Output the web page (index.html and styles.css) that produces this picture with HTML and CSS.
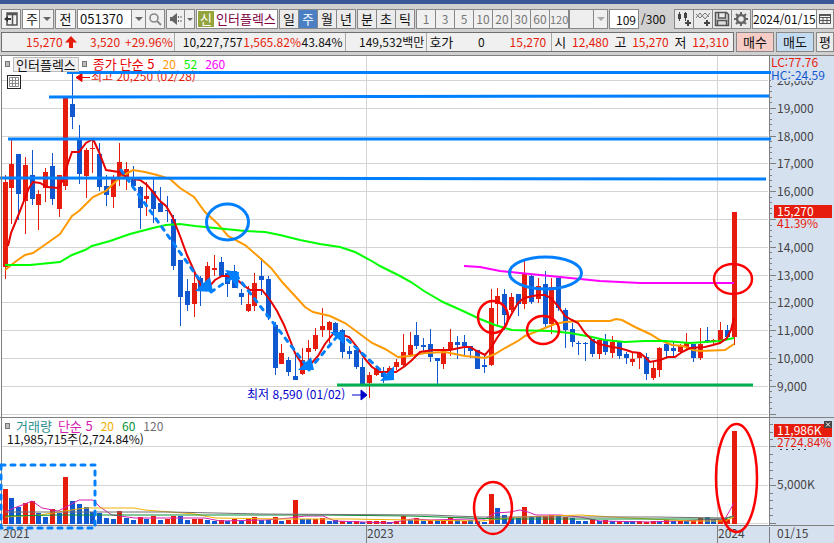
FILE: index.html
```
<!DOCTYPE html>
<html lang="ko">
<head>
<meta charset="utf-8">
<title>인터플렉스 주봉 차트</title>
<link rel="stylesheet" href="styles.css">
</head>
<body>
<div class="app">
<header class="toolbar">
  <button class="box icon-btn" aria-label="패널">
    <svg width="14" height="14" viewBox="0 0 14 14"><path d="M3 1h10v12H3zM3 2.500h10M8.500 3v10" fill="none" stroke="#555" stroke-width="1.500"/><path d="M0 7l4-3v6zM4 6h3v2H4z" fill="#333"/></svg>
  </button>
  <span class="box drop w-cycle"><select aria-label="주기"><option>주</option></select></span>
  <button class="box key">전</button>
  <span class="box code">
    <input type="text" value="051370" aria-label="종목코드">
    <button class="sub arrow" aria-label="종목 목록"></button>
    <button class="sub" aria-label="검색"><svg width="14" height="14" viewBox="0 0 14 14"><circle cx="6" cy="6" r="4" fill="none" stroke="#888" stroke-width="1.600"/><path d="M9 9l4 4" stroke="#888" stroke-width="2"/></svg></button>
  </span>
  <span class="box sound">
    <button class="sub wide" aria-label="소리"><svg width="14" height="14" viewBox="0 0 14 14"><path d="M1 5h2l5-4v12l-5-4H1z" fill="#666"/><path d="M9.500 4v6M12 4v6" stroke="#666" stroke-dasharray="2 2"/></svg></button>
    <button class="sub arrow thin" aria-label="소리 설정"></button>
  </span>
  <span class="box stock"><b class="badge">신</b><span class="name">인터플렉스</span></span>
  <span class="box group">
    <button>일</button><button class="on">주</button><button>월</button><button>년</button>
  </span>
  <span class="box group">
    <button>분</button><button>초</button><button>틱</button>
  </span>
  <span class="box group off">
    <button disabled>1</button><button disabled>3</button><button disabled>5</button><button disabled>10</button><button disabled>20</button><button disabled>30</button><button disabled>60</button><button disabled>120</button>
  </span>
  <span class="box drop w-min off"><select aria-label="분 주기" disabled><option></option></select></span>
  <span class="count"><input class="box" type="text" value="109" aria-label="표시 봉 수"><span>/300</span></span>
  <span class="box group tools">
    <button aria-label="종목 추가"><svg width="16" height="16" viewBox="0 0 16 16"><path d="M3.500 1v9M9.500 1v9" stroke="#444"/><path d="M2 3h3v5H2zM8 2h3v5H8z" fill="#444"/><path d="M9 12h6M12 9v6" stroke="#444" stroke-width="2"/></svg></button>
    <button aria-label="지표 추가"><svg width="16" height="16" viewBox="0 0 16 16"><path d="M1 7l4-5 5 6 5-6M1 3l4 4 5-5 4 4" fill="none" stroke="#777"/><path d="M9 12h6M12 9v6" stroke="#444" stroke-width="2"/></svg></button>
    <button aria-label="저장"><svg width="16" height="16" viewBox="0 0 16 16"><path d="M1.500 1.500h11l2 2v11h-13zM4.500 2v5h7V2M3.500 14.500v-5h9v5" fill="#ddd" stroke="#555" stroke-width="1.500"/></svg></button>
    <button aria-label="설정"><svg width="16" height="16" viewBox="0 0 16 16"><circle cx="8" cy="8" r="4" fill="none" stroke="#666" stroke-width="2.500"/><path d="M8 1v3M8 12v3M1 8h3M12 8h3M3 3l2 2M11 11l2 2M13 3l-2 2M5 11l-2 2" stroke="#666" stroke-width="2"/></svg></button>
  </span>
  <span class="box date">
    <input type="text" value="2024/01/15" aria-label="날짜">
    <button class="sub" aria-label="달력"><svg width="14" height="14" viewBox="0 0 14 14"><path d="M1.500 2.500h11v9h-11zM1 5.500h12M5 5v7M9 5v7M1 8.500h12" fill="none" stroke="#555"/><path d="M1 2h12v2H1z" fill="#555"/></svg></button>
  </span>
</header>

<div class="quote">
  <div class="cells">
    <div class="cell c1"><span class="up">15,270</span><svg width="12" height="12" viewBox="0 0 12 12"><path d="M6 0l6 6.500H8V12H4V6.500H0z" fill="#e61c0c"/></svg><span class="up change">3,520</span><span class="up">+29.96%</span></div>
    <div class="cell c2"><span>10,227,757</span><span class="up">1,565.82%</span><span>43.84%</span></div>
    <div class="cell c3"><span>149,532백만</span></div>
    <div class="cell c4"><span class="k">호가</span><span>0</span><span class="up">15,270</span></div>
    <div class="cell c5"><span class="k">시</span><span class="up">12,480</span><span class="k">고</span><span class="up">15,270</span><span class="k">저</span><span class="up">12,310</span></div>
  </div>
  <button class="trade buy">매수</button>
  <button class="trade sell">매도</button>
  <button class="trade avg">평</button>
</div>

<main class="charts">
  <section class="panel">
    <svg class="plot" viewBox="0 55 834 362" role="img" aria-label="주가 차트">
      <rect class="paper" x="0" y="55" width="834" height="362"/>
      <rect class="axis-bg" x="770" y="55" width="64" height="362"/>
      <g id="price-grid" class="grid"></g>
      <path class="grid" d="M366.500 56V417M717.500 56V417"/>
      <g id="candles"></g>
      <g class="ma">
        <polyline stroke="#f0f" points="464,266 480,267 500,271 520,273 550,276 580,279 600,281 640,283 734,283"/>
        <polyline stroke="#f90" points="5,270 15,262 25,255 33,253 46,244 60,234 72,216 79,211 93,197 106,191 113,184 122,176 133,170 145,172 157,175 170,179 180,188 194,197 205,212 218,224 228,236 245,245 260,258 271,268 283,283 295,296 305,307 313,312 330,316 345,323 360,334 372,343 385,349 398,357 410,356 425,353 445,352 465,356 485,358 495,354 505,348 518,341 525,336 540,330 555,324 565,322 580,321 610,321 616,319 622,320 635,327 650,334 660,340 672,345 683,346 693,350 700,351 725,350 734,344"/>
        <polyline stroke="#0f0" points="5,265 30,265 60,262 72,255 85,250 92,246 110,241 130,234 153,228 166,225 180,224 195,226 215,228 245,231 265,232 280,235 300,240 320,244 340,247 355,252 370,260 380,266 400,276 411,282 424,291 443,302 463,311 480,319 495,325 505,328 512,330 550,331 570,333 592,337 605,340 625,342 645,341 665,341 690,343 705,342 720,341 734,338"/>
        <polyline stroke="#e60000" points="8,246 11,233 18,216 25,198 29,188 33,182 40,183 47,187 58,188 63,180 66,170 68,163 72,152 79,152 86,143 93,139 99,152 106,170 119,172 126,177 133,179 140,180 147,185 153,192 160,201 166,206 172,216 180,236 187,255 195,273 203,290 208,288 215,280 222,276 228,276 235,278 242,284 250,290 262,290 270,300 277,311 284,325 290,340 295,353 302,364 310,365 318,356 325,344 333,334 340,334 349,337 357,347 365,359 372,367 380,372 396,372 405,366 412,360 420,352 433,350 450,350 464,347 470,347 477,351 485,355 491,348 497,338 504,328 511,315 518,303 524,298 538,295 545,295 551,298 558,306 565,316 572,320 578,323 585,333 592,340 599,344 612,347 619,348 626,350 632,352 640,353 646,358 650,362 660,360 668,357 675,357 682,352 690,348 705,347 713,345 720,343 727,338 731,330 734,318"/>
      </g>
      <path class="axis-line" d="M769.500 55V417"/>
      <g id="price-ticks"></g>
      <text class="up-text" x="91" y="81">최고 20,250 (02/28)</text>
      <path d="M76 77.500l6-4v8zM82 77.500h8" fill="#e60000" stroke="#e60000"/>
      <text class="low-text" x="247" y="399">최저 8,590 (01/02)</text>
      <path d="M367 395l-6-5v10zM352 395h10" fill="#00c" stroke="#00c"/>
      <g class="mark-blue">
        <path d="M67 72.500H771M49 97L769 96M8 139H771M0 178L766 179"/>
        <ellipse cx="227.500" cy="222" rx="21" ry="18"/>
        <ellipse cx="545.500" cy="273" rx="36" ry="16"/>
        <path class="dash" d="M121 170L204 286M211 292L236 275M236 275L306 365M309 370L340 333M340 333L388 377"/>
      </g>
      <g fill="#0080ff">
        <path d="M195 291L210 277L213 292zM225 270L239 272L238 289zM298 370L311 357L314 370zM330 332L344 332L344 344zM380 381L394 366L394 380z"/>
      </g>
      <path d="M337 385H753" stroke="#00b050" stroke-width="3"/>
      <g class="mark-red">
        <ellipse cx="493" cy="317" rx="15" ry="16"/>
        <ellipse cx="543" cy="330" rx="16" ry="14"/>
        <ellipse cx="733" cy="279" rx="19" ry="15"/>
      </g>
      <rect class="axis-bg" x="771" y="56" width="63" height="25"/>
      <text class="up-text" x="771" y="67">LC:77.76</text>
      <text class="hc" x="771" y="80">HC:-24.59</text>
      <rect class="tag" x="774" y="205" width="58" height="13"/>
      <text class="tag-text" x="777" y="216">15,270</text>
      <text class="up-text" x="777" y="228">41.39%</text>
      <path class="axis-line" d="M1.500 55V417M0 55.500H834"/>
    </svg>
    <div class="legend">
      <i class="dot"></i><span class="title">인터플렉스</span><i class="dot"></i>
      <span class="l5">종가</span><span class="l5">단순 5</span><span class="num l20">20</span><span class="num l52">52</span><span class="num l260">260</span>
    </div>
    <button class="grid-btn" aria-label="표"><svg width="10" height="10" viewBox="0 0 10 10"><path d="M.5.500h9v9h-9zM3.500 0v10M6.500 0v10M0 3.500h10M0 6.500h10" fill="none" stroke="#888"/></svg></button>
  </section>

  <section class="panel">
    <svg class="plot" viewBox="0 417 834 126" role="img" aria-label="거래량 차트">
      <rect class="paper" x="0" y="417" width="834" height="126"/>
      <rect class="axis-bg" x="770" y="417" width="64" height="126"/>
      <rect class="axis-bg" x="0" y="526" width="834" height="17"/>
      <path class="grid" d="M2 446.500H768M2 485.500H768M2 523.500H768M366.500 418V525M717.500 418V525"/>
      <g id="volumes"></g>
      <g class="vma">
        <polyline stroke="#d420b0" points="5,512 14,508 25,504 32,501 42,508 58,511 66,507 79,500 93,500 100,507 112,515 135,518 180,518 205,518 220,521 265,520 290,518 305,516 323,516 335,521 390,523 412,519 430,520 470,519 485,519 495,513 510,512 520,510 528,512 536,515 560,515 580,517 600,521 650,522 700,520 725,519 734,503"/>
        <polyline stroke="#f0b000" points="5,517 40,515 65,511 85,508 134,508 145,510 170,512 195,514 215,518 280,519 350,519 410,520 480,521 520,517 580,515 630,518 690,521 725,521 734,517"/>
        <polyline stroke="#099236" points="5,516 60,515 220,515 320,515 410,516 470,518 500,519 560,519 690,519 725,519 734,516"/>
        <polyline stroke="#707070" points="5,512 170,512 260,514 430,515 480,517 655,517 725,518 734,516"/>
      </g>
      <path class="axis-line" d="M0 417.500H834M0 525.500H834M1.500 417V526M769.500 417V526M769.500 527V543M366.500 526V543M717.500 526V543M770 446.500H776M770 485.500H776M770 523.500H776"/>
      <path class="axis-line" d="M770 424.500h3M770 432.500h3M770 439.500h3M770 454.500h3M770 462.500h3M770 470.500h3M770 478.500h3M770 493.500h3M770 500.500h3M770 508.500h3M770 515.500h3"/>
      <text x="3" y="538">2021</text><text x="367" y="538">2023</text><text x="718" y="538">2024</text><text x="777" y="538">01/15</text>
      <text x="777" y="489">5,000K</text>
      <rect class="tag" x="774" y="424" width="58" height="13"/>
      <text class="tag-text" x="777" y="435">11,986K</text>
      <text class="up-text" x="777" y="447">2724.84%</text>
      <path d="M780 449.500h26" stroke="#444" stroke-dasharray="2 4"/>
      <rect x="824" y="421" width="8" height="7" fill="#444"/><path d="M826 422.500l4 4M830 422.500l-4 4" stroke="#fff"/>
      <path class="mark-blue dash" d="M1 465H95V528H1z"/>
      <g class="mark-red">
        <ellipse cx="493" cy="508" rx="19" ry="26"/>
        <ellipse cx="736.500" cy="478" rx="20.500" ry="54"/>
      </g>
    </svg>
    <div class="legend">
      <i class="dot"></i><span class="v">거래량</span><span class="v5">단순 5</span><span class="num v20">20</span><span class="num v60">60</span><span class="num v120">120</span>
    </div>
    <div class="volume-now">11,985,715주(2,724.84%)</div>
  </section>
</main>
</div>
<script src="chart.js"></script>
</body>
</html>
```
FILE: styles.css
```
* { box-sizing: border-box; }
:root {
  --line: #888;
  --up: #e61c0c;
}
body {
  margin: 0;
  background: #d0d0d0;
  color: #111;
  font: 13px/16px "Noto Sans CJK KR", sans-serif;
  overflow: hidden;
}
.app { border-top: 4px solid #3a5795; }
button, input, select {
  font: inherit;
  color: inherit;
  margin: 0;
  padding: 0;
  border: 0;
  border-radius: 0;
  background: #ebebeb;
  min-width: 0;
}
svg { display: block; flex: none; }

.toolbar {
  display: flex;
  align-items: center;
  gap: 1px;
  height: 28px;
  padding: 5px 0 3px 1px;
  white-space: nowrap;
}
.box {
  display: flex;
  flex: none;
  align-items: stretch;
  height: 20px;
  border: 1px solid var(--line);
  background: #f4f4f4;
}
.icon-btn { width: 20px; align-items: center; justify-content: center; }
.drop { position: relative; background: #fff; }
.drop select {
  appearance: none;
  width: 100%;
  padding: 0 13px 0 3px;
  background: transparent;
  opacity: 1;
}
.drop::after, .arrow::after {
  content: "";
  border: 4px solid transparent;
  border-top-color: #666;
  border-bottom: 0;
}
.drop::before {
  content: "";
  position: absolute;
  right: 0;
  width: 13px;
  height: 100%;
  border-left: 1px solid var(--line);
  background: #f0f0f0;
}
.drop::after { position: absolute; right: 2px; top: 7px; }
.w-cycle { width: 32px; }
.w-min { width: 39px; margin-left: -1px; }
.off, .off.drop { background: #eee; color: #777; }
.off.drop::after { border-top-color: #aaa; }
.key { width: 21px; justify-content: center; align-items: center; }
.code { width: 88px; }
.code input { flex: 1; width: 0; padding-left: 2px; background: #fff; }
.sub {
  display: flex;
  flex: none;
  align-items: center;
  justify-content: center;
  width: 19px;
  border-left: 1px solid var(--line);
  background: #f0f0f0;
}
.arrow { width: 14px; }
.wide { width: 17px; border-left: 0; }
.thin { width: 10px; }
.thin::after { border-width: 3px 3px 0; }
.stock { width: 82px; background: #fff; color: #800040; overflow: hidden; }
.badge {
  width: 16px;
  margin: 1px;
  background: #94a43c;
  color: #fff;
  text-align: center;
  font-weight: 400;
}
.name { padding-left: 1px; line-height: 18px; }
.group button { width: 19px; border-left: 1px solid var(--line); }
.group button:first-child { border-left: 0; width: 18px; }
.group .on { background: #4a7fc4; color: #fff; }
.off { font-size: 12px; }
.off button { background: #f0f0f0; color: #777; }
.off button:last-child { font-size: 11px; }
.count { display: flex; align-items: center; gap: 2px; width: 64px; }
.count input { width: 30px; padding-right: 2px; background: #fff; text-align: right; }
.count { font-size: 12px; }
.tools button { display: flex; align-items: center; justify-content: center; }
.date { flex: 1 0 82px; background: #fff; font-size: 12px; }
.date input { flex: 1; width: 0; background: #fff; }
.date .sub { width: 17px; }

.quote {
  display: flex;
  gap: 2px;
  height: 20px;
  padding-left: 1px;
  white-space: nowrap;
}
.cells {
  display: grid;
  grid-template-columns: 172fr 171fr 82fr 125fr 182fr;
  flex: 735 1 0;
  min-width: 0;
  border: 1px solid #707070;
  background: #f0f0f0;
  font-size: 12px;
  line-height: 18px;
}
.cell { display: flex; align-items: center; justify-content: space-between; min-width: 0; padding: 0 2px; }
.cell + .cell { border-left: 1px solid #aaa; }
.up { color: var(--up); }
.k { font-size: 13px; }
.cell.c1 { gap: 2px; padding: 0 1px 0 24px; }
.change { margin: 0 3px 0 auto; }
.cell.c2 { padding-left: 8px; }
.cell.c3 { justify-content: flex-end; }
.cell.c4 { padding-right: 5px; }
.cell.c5 { padding-right: 4px; }
.trade { flex: none; width: 38px; border: 1px solid var(--line); }
.trade.buy { background: #f5ccc6; }
.trade.sell { background: #c4dcf2; }
.trade.avg { width: 18px; }

.charts { margin-top: 3px; }
.panel { position: relative; }
.plot { width: 100%; height: auto; }
.paper { fill: #fff; }
.axis-bg { fill: #d6e1f0; }
.grid { stroke: #d4d4d4; fill: none; }
.axis-line { stroke: #808080; fill: none; }
.plot text { fill: #444; font-size: 12px; }
.plot .up-text { fill: var(--up); }
.plot .low-text { fill: #00c; }
.plot .hc { fill: #1058d0; }
.plot .tag-text { fill: #fff; }
.tag { fill: var(--up); }
.ma { fill: none; stroke-width: 2; }
.vma { fill: none; stroke-width: 1; }
.mark-blue { fill: none; stroke: #0080ff; stroke-width: 3; }
.mark-red { fill: none; stroke: #f00; stroke-width: 2.500; }
.mark-blue .dash, .mark-blue.dash { stroke-dasharray: 4 6; stroke-linecap: round; }
.rise { fill: #e61c0c; }
.fall { fill: #1058d0; }

.legend {
  position: absolute;
  top: 1px;
  left: 5px;
  display: flex;
  align-items: center;
  gap: 6px;
  line-height: 16px;
}
.dot { width: 5px; height: 6px; border: 1px solid #777; background: #bbb; }
.title { margin: 0 -3px; padding: 0 2px; border: 1px solid #bbb; background: #f0f0f0; line-height: 13px; }
.num { margin-left: 2px; font-size: 12px; }
.l5 { color: #e60000; }
.l5 + .l5 { margin-left: -3px; }
.l20 { color: #f90; }
.l52 { color: #0e0; }
.l260 { color: #f0f; }
.v { color: #2a9090; }
.v5 { color: #d420b0; }
.v20 { color: #f0b000; }
.v60 { color: #099236; }
.v120 { color: #707070; }
.volume-now { position: absolute; top: 14px; left: 7px; font-size: 12px; }
.grid-btn {
  position: absolute;
  top: 20px;
  left: 7px;
  display: flex;
  align-items: center;
  justify-content: center;
  width: 14px;
  height: 14px;
  border: 1px solid #222;
  background: #fff;
}
```
FILE: chart.js
```
// One entry per week: direction, high, low, body top, body bottom (chart units).
const candles = `R175,279,182,267 R140,224,164,188 B154,220,154,194 R157,234,165,201 B150,205,175,199 R190,230,194,205
R168,202,172,188 B153,205,166,199 R175,217,175,209 R97,190,97,186 B73,129,104,117 B125,184,139,174
R148,198,150,176 R139,173,148,149 B143,191,154,187 B175,206,186,195 R175,208,177,197 R143,186,162,178
R162,190,169,178 B166,188,178,186 B186,229,187,208 R182,216,196,199 B179,223,191,209 B187,212,203,212
B196,222,210,211 B215,270,219,266 B260,326,260,297 B279,311,291,305 R272,317,283,304 B276,306,278,290
R262,287,266,286 R255,276,268,270 B257,277,262,276 B272,297,273,284 B265,288,271,288 B289,305,293,297
R286,312,304,311 R273,311,283,306 B258,295,276,280 B276,320,279,317 B322,375,325,368 R344,364,353,364
B357,376,360,372 B354,380,376,380 R348,375,360,374 R340,360,348,352 R328,351,335,349 R308,337,326,330
R321,343,322,330 B322,335,323,332 B329,358,330,352 B346,359,351,354 B349,369,350,367 B358,385,367,384
R372,398,375,383 R366,376,369,375 B367,383,372,377 R366,374,368,373 R359,370,362,367 R334,366,352,365
R332,357,345,355 B322,349,335,346 B338,351,345,347 B329,362,344,357 B358,386,358,361 R347,369,349,364
R329,356,342,349 B336,359,342,345 B335,355,342,346 B346,358,346,351 B350,369,350,369 B355,373,365,367
R289,366,308,365 R288,325,296,304 B289,330,294,315 R293,312,297,310 B294,316,294,304 R259,309,274,304
B275,304,276,302 R278,303,286,299 B271,327,284,324 R278,334,287,324 B276,311,278,308 B308,348,310,330
B323,347,329,342 B341,355,343,344 B342,361,343,344 B339,357,339,354 R339,359,340,354 B334,355,340,352
R336,358,342,353 B341,359,341,356 B352,364,354,358 R353,366,359,362 R353,369,353,358 B353,380,357,374
R362,380,368,378 R347,377,348,370 B341,358,344,351 B341,357,348,351 R344,353,346,352 R333,351,343,347
B344,362,344,358 R328,360,344,358 B327,343,340,342 R339,345,340,341 R322,341,330,341 B325,340,330,337
R212,345,212,337`.split(/\s+/);

// Direction and bar top for each week's volume.
const volumes = `R489 B498 B507 R503 R501 B513 B517 R509 B513 R477 B501 B504 B507 B512 B513 B518 B519 R511 B518 B520
R517 B519 R516 B520 R519 R516 B516 B520 R519 R519 B520 B521 R520 B521 R519 B521 R519 R517 B520 B520
R517 B521 R520 R500 B519 B519 R519 R518 B521 B520 R521 B521 R521 B522 R521 R521 R521 B522 R521 R516
B520 R518 B521 R520 B520 R521 R517 B520 R521 B520 B521 B522 R494 B508 B515 B518 B518 R507 B517 B516
R516 R515 B516 R517 B518 B521 B521 R519 B521 R520 B521 R521 B521 B521 R521 R522 R521 B521 R520 B521
R521 B521 R520 R518 B517 B519 R520 R519 R431`.split(/\s+/);

const NS = "http://www.w3.org/2000/svg";
const add = (parent, name, attrs, text) => {
  const el = document.createElementNS(NS, name);
  for (const key in attrs) el.setAttribute(key, attrs[key]);
  if (text) el.textContent = text;
  parent.appendChild(el);
};
const byId = id => document.getElementById(id);
const xAt = i => Math.floor(5 + 6.75 * i);
const tone = s => (s[0] === "R" ? "rise" : "fall");

candles.forEach((s, i) => {
  const [high, low, top, bottom] = s.slice(1).split(",").map(Number);
  const x = xAt(i);
  add(byId("candles"), "rect", { class: tone(s), x, y: high, width: 1, height: low - high });
  add(byId("candles"), "rect", { class: tone(s), x: x - 2, y: top, width: 5, height: Math.max(1, bottom - top) });
});

volumes.forEach((s, i) => {
  const top = Number(s.slice(1));
  add(byId("volumes"), "rect", { class: tone(s), x: xAt(i) - 2, y: top, width: 5, height: 524 - top });
});

for (let k = 0; k <= 12; k++) {
  const price = 20 - k;
  const y = Math.round(80 + k * 27.8) + 0.5;
  add(byId("price-grid"), "path", { d: `M2 ${y}H768` });
  add(byId("price-ticks"), "path", { class: "axis-line", d: `M770 ${y}h6` });
  for (let m = 1; m < 5 && k < 12; m++) {
    const ty = Math.round(80 + (k + m / 5) * 27.8) + 0.5;
    add(byId("price-ticks"), "path", { class: "axis-line", d: `M770 ${ty}h2` });
  }
  if (price !== 15 && price !== 8) add(byId("price-ticks"), "text", { x: 777, y: y + 4 }, `${price},000`);
}
```
